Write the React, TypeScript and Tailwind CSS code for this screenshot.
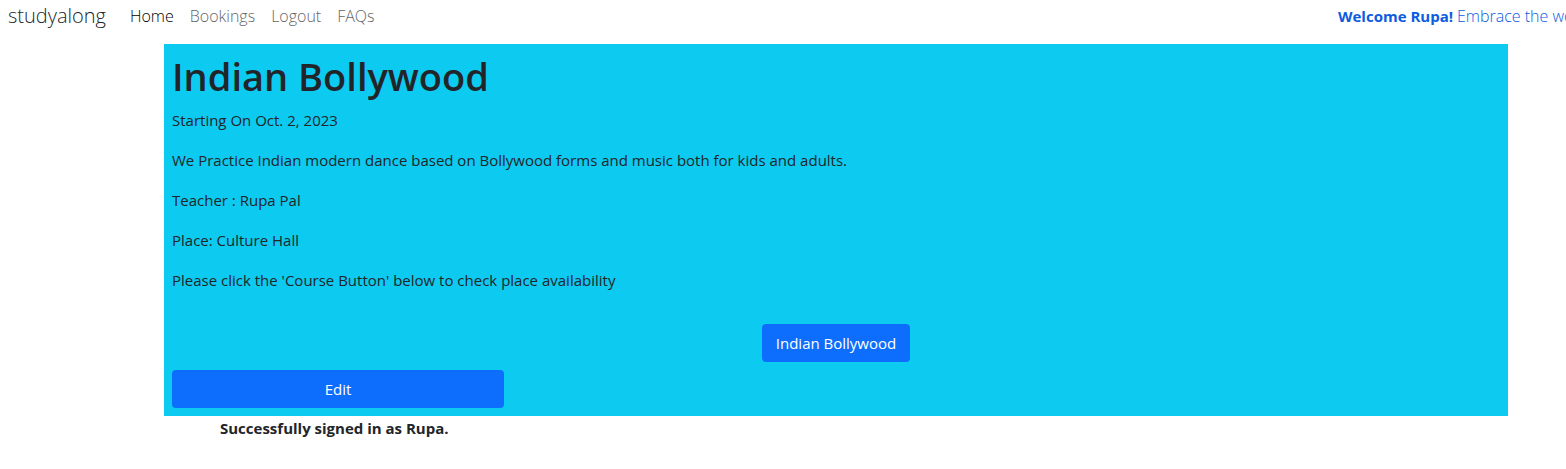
const details = [
  'Starting On Oct. 2, 2023',
  'We Practice Indian modern dance based on Bollywood forms and music both for kids and adults.',
  'Teacher : Rupa Pal',
  'Place: Culture Hall',
  "Please click the 'Course Button' below to check place availability",
];

const links = ['Home', 'Bookings', 'Logout', 'FAQs'];

export default function App() {
  return (
    <div className="overflow-x-hidden bg-white font-['Segoe_UI','Open_Sans',sans-serif] text-[15px] leading-6 text-[#212529]">
      <nav className="flex items-center px-2 pb-3">
        <a href="#" className="mr-6 text-xl leading-8 font-light">studyalong</a>
        <ul className="flex gap-4 text-base font-light">
          {links.map((link) => (
            <li key={link}>
              <a href="#" className={link === 'Home' ? 'text-black' : 'text-[#666666]'}>{link}</a>
            </li>
          ))}
        </ul>
        <p className="ml-auto w-[220px] shrink-0 whitespace-nowrap text-[#0d5be1]">
          <strong className="font-bold">Welcome Rupa!</strong> <span className="text-base font-light">Embrace the world</span>
        </p>
      </nav>
      <main>
        <section className="mr-[58px] ml-[164px] bg-[#0dcaf0] p-2">
          <h1 className="mb-2 text-[38px] leading-12 font-semibold">Indian Bollywood</h1>
          <div className="flex flex-col gap-4">
            {details.map((line) => (
              <p key={line}>{line}</p>
            ))}
          </div>
          <div className="mt-8 flex justify-center">
            <button type="button" className="rounded bg-[#0d6efd] px-[14px] py-[7px] text-white">Indian Bollywood</button>
          </div>
          <button type="button" className="mt-2 block w-1/4 rounded bg-[#0d6efd] px-[14px] py-[7px] text-white">Edit</button>
        </section>
        <p role="status" className="ml-[220px] font-bold">Successfully signed in as Rupa.</p>
      </main>
    </div>
  );
}
